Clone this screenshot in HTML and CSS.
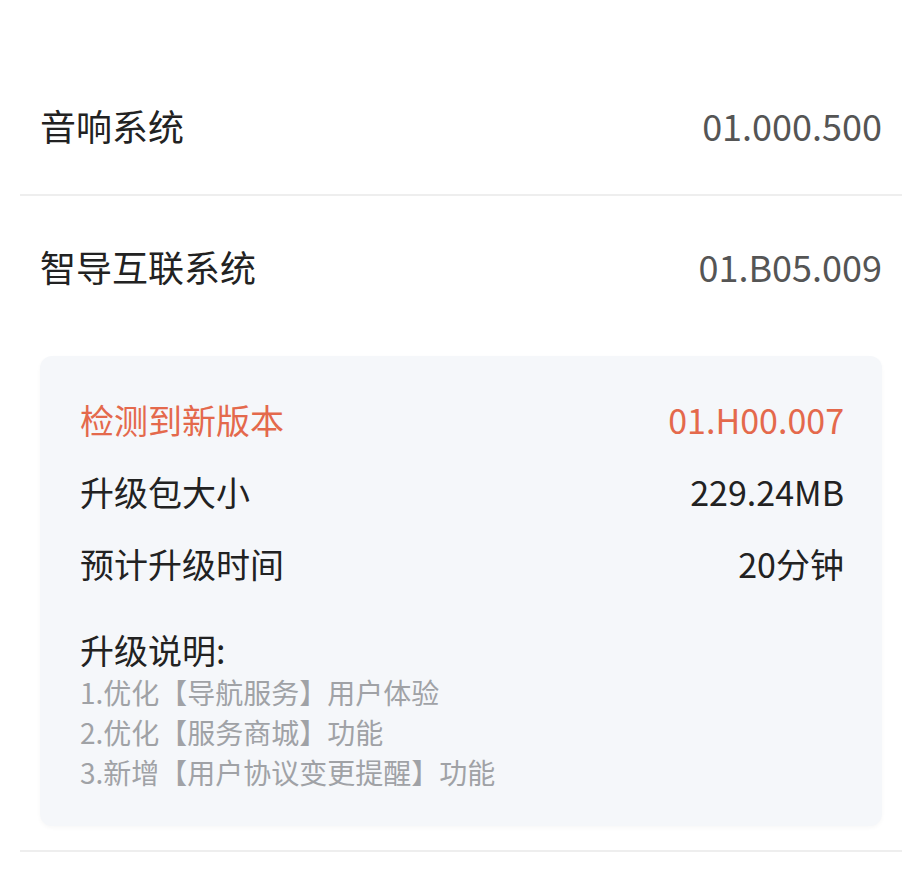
FILE: index.html
```html
<!DOCTYPE html>
<html lang="zh-CN">

<head>
    <meta charset="UTF-8">
    <meta name="viewport" content="width=device-width, initial-scale=1.0">
    <title>系统升级</title>
    <link rel="stylesheet" href="styles.css">
</head>

<body>
    <div class="container">
        <div class="row row-line">
            <span class="name">音响系统</span>
            <span class="version">01.000.500</span>
        </div>
        <div class="row">
            <span class="name">智导互联系统</span>
            <span class="version">01.B05.009</span>
        </div>

        <div class="update-card">
            <div class="info-row new-version">
                <span>检测到新版本</span>
                <span>01.H00.007</span>
            </div>
            <div class="info-row">
                <span>升级包大小</span>
                <span>229.24MB</span>
            </div>
            <div class="info-row">
                <span>预计升级时间</span>
                <span>20分钟</span>
            </div>

            <div class="notes">
                <h3>升级说明:</h3>
                <p>1.优化【导航服务】用户体验</p>
                <p>2.优化【服务商城】功能</p>
                <p>3.新增【用户协议变更提醒】功能</p>
            </div>
        </div>

        <div class="divider"></div>
    </div>
</body>

</html>
```

FILE: styles.css
```css
body {
    font-family: "Noto Sans CJK SC", "Noto Sans", sans-serif;
    margin: 0;
    padding: 0;
    background: #ffffff;
    color: #222222;
}

.container {
    padding: 56px 20px 0;
}

.row {
    display: flex;
    align-items: center;
    justify-content: space-between;
    height: 140px;
    padding: 0 20px;
    font-size: 36px;
}

.row-line {
    height: 138px;
    border-bottom: 2px solid #eeeeee;
}

.row .version {
    color: #555555;
}

.update-card {
    margin: 20px 20px 0;
    padding: 27px 38px 34px 40px;
    background-color: #f5f7fa;
    border-radius: 12px;
    box-shadow: 0 2px 4px rgba(0, 0, 0, 0.03);
}

.info-row {
    display: flex;
    align-items: center;
    justify-content: space-between;
    height: 72px;
    font-size: 34px;
    color: #222222;
}

.new-version {
    color: #e4694c;
}

.notes {
    margin-top: 29px;
}

.notes h3 {
    margin: 0;
    font-size: 34px;
    font-weight: normal;
    line-height: 44px;
}

.notes p {
    margin: 0;
    font-size: 28px;
    line-height: 40px;
    color: #a0a2a6;
}

.divider {
    margin-top: 24px;
    border-top: 2px solid #eeeeee;
}
```
